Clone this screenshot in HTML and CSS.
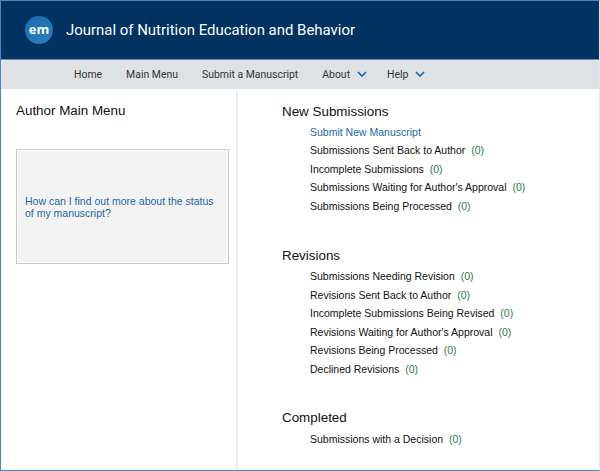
FILE: index.html
```html
<!DOCTYPE html>
<html lang="en">
<head>
<meta charset="utf-8">
<title>Author Main Menu</title>
<link rel="stylesheet" href="styles.css">
</head>
<body>
<div class="window">
  <header class="masthead">
    <div class="logo">em</div>
    <div class="journal">Journal of Nutrition Education and Behavior</div>
  </header>
  <nav class="nav">
    <a class="nav-item">Home</a>
    <a class="nav-item">Main Menu</a>
    <a class="nav-item">Submit a Manuscript</a>
    <a class="nav-item">About <svg class="chev" viewBox="0 0 10 6"><path d="M1 1l4 4 4-4"/></svg></a>
    <a class="nav-item">Help <svg class="chev" viewBox="0 0 10 6"><path d="M1 1l4 4 4-4"/></svg></a>
  </nav>
  <main class="content">
    <aside class="side">
      <h1 class="side-title">Author Main Menu</h1>
      <div class="tip"><a class="link">How can I find out more about the status of my manuscript?</a></div>
    </aside>
    <section class="menu">
      <div class="group group-new">
        <h2 class="group-title">New Submissions</h2>
        <ul class="list">
          <li><a class="link">Submit New Manuscript</a></li>
          <li>Submissions Sent Back to Author <span class="count">(0)</span></li>
          <li>Incomplete Submissions <span class="count">(0)</span></li>
          <li>Submissions Waiting for Author's Approval <span class="count">(0)</span></li>
          <li>Submissions Being Processed <span class="count">(0)</span></li>
        </ul>
      </div>
      <div class="group group-rev">
        <h2 class="group-title">Revisions</h2>
        <ul class="list">
          <li>Submissions Needing Revision <span class="count">(0)</span></li>
          <li>Revisions Sent Back to Author <span class="count">(0)</span></li>
          <li>Incomplete Submissions Being Revised <span class="count">(0)</span></li>
          <li>Revisions Waiting for Author's Approval <span class="count">(0)</span></li>
          <li>Revisions Being Processed <span class="count">(0)</span></li>
          <li>Declined Revisions <span class="count">(0)</span></li>
        </ul>
      </div>
      <div class="group group-done">
        <h2 class="group-title">Completed</h2>
        <ul class="list">
          <li>Submissions with a Decision <span class="count">(0)</span></li>
        </ul>
      </div>
    </section>
  </main>
</div>
</body>
</html>
```
FILE: styles.css
```css
html, body { margin: 0; padding: 0; }
body { width: 600px; height: 471px; overflow: hidden; background: #fff; font-family: "Liberation Sans", Arial, sans-serif; }
.window { box-sizing: border-box; width: 600px; height: 471px; border: 1px solid #4a86c4; border-right-color: #dfe6ee; display: flex; flex-direction: column; }
.masthead { height: 58px; flex: none; background: #003361; display: flex; align-items: center; padding-left: 24px; border-bottom: 1px solid #6f8cab; }
.logo { width: 28px; height: 28px; border-radius: 50%; background: linear-gradient(160deg, #1a6cae, #2a7fbe); color: #fff; font: bold 13px/27px "Open Sans", sans-serif; text-align: center; }
.journal { margin-left: 13px; color: #fff; font: 14.95px/20px Roboto, sans-serif; }
.nav { height: 29px; flex: none; background: #dfe2e5; display: flex; align-items: center; padding-left: 73px; gap: 24px; }
.nav-item { font: 10.45px/16px Roboto, sans-serif; color: #333; display: flex; align-items: center; gap: 7px; }
.chev { width: 10px; height: 6px; margin: 0 -4px 2px 0; fill: none; stroke: #1a6ca8; stroke-width: 1.7; }
.content { flex: 1; display: flex; min-height: 0; }
.side { box-sizing: border-box; width: 237px; flex: none; border-right: 2px solid #ececec; margin-top: 2px; padding: 11px 7px 0 15px; }
.side-title { margin: 0; font-weight: normal; font-size: 13.4px; line-height: 18px; color: #111; }
.tip { box-sizing: border-box; height: 115px; margin-top: 29px; border: 1px solid #c8c8c8; background: #f3f3f3; box-shadow: inset 0 0 0 1px #fff; display: flex; align-items: center; padding: 0 8px; font-size: 10.5px; line-height: 12px; }
.link { color: #1a67a3; }
.menu { flex: 1; padding: 14px 0 0 44px; }
.group-new { height: 144px; }
.group-rev { height: 162px; }
.group-title { margin: 0; font-weight: normal; font-size: 13.4px; line-height: 18px; color: #111; }
.list { list-style: none; margin: 2px 0 0; padding: 0 0 0 28px; font-size: 10.5px; line-height: 18.6px; color: #111; }
.group-new .list { margin-top: 1.6px; }
.group-done .list { margin-top: 3px; }
.count { color: #2b7a4b; margin-left: 3px; }
```
